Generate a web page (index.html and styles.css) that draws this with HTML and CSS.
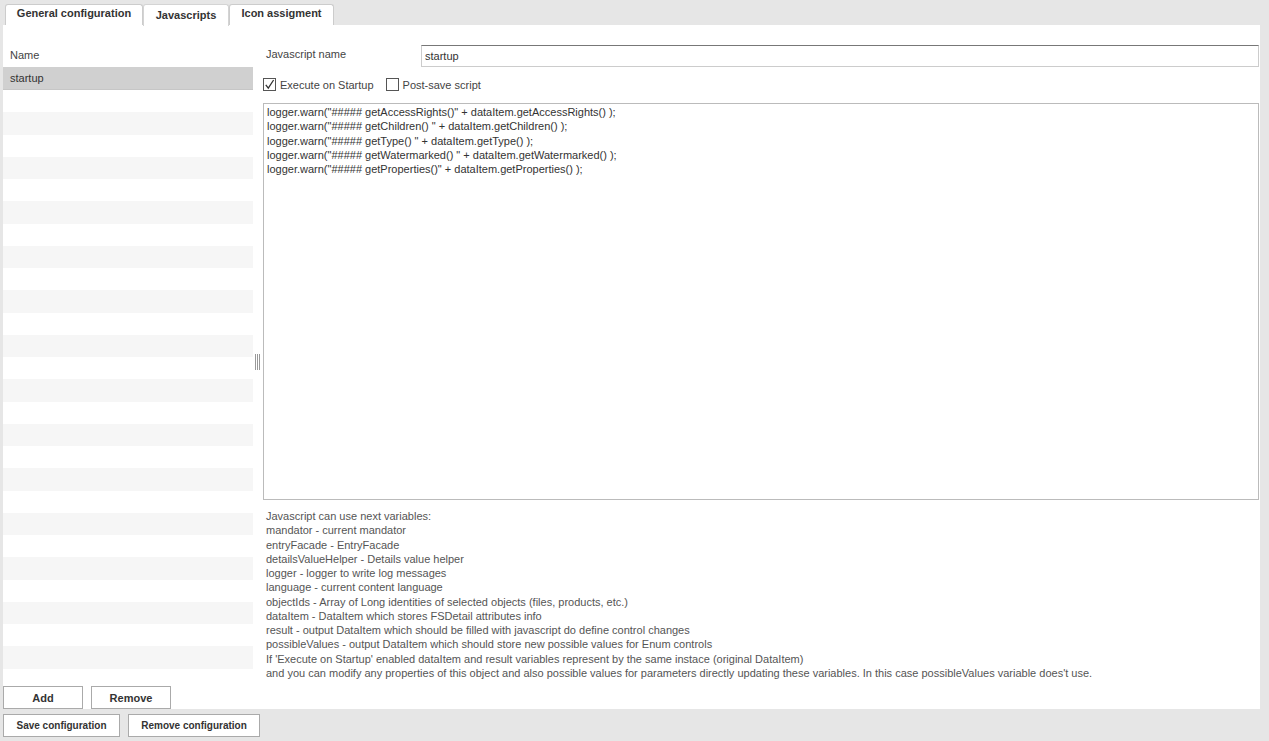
FILE: index.html
```html
<!DOCTYPE html>
<html lang="en">
<head>
    <meta charset="UTF-8">
    <title>Javascripts</title>
    <link rel="stylesheet" href="styles.css">
</head>
<body>

<div class="tabs">
    <div class="tab tab-general">General configuration</div>
    <div class="tab tab-scripts active">Javascripts</div>
    <div class="tab tab-icons">Icon assigment</div>
</div>

<div class="panel">
    <!-- Script list -->
    <div class="list-col">
        <div class="list-header">Name</div>
        <div class="list">
            <div class="row selected">startup</div>
            <div class="row"></div><div class="row alt"></div>
            <div class="row"></div><div class="row alt"></div>
            <div class="row"></div><div class="row alt"></div>
            <div class="row"></div><div class="row alt"></div>
            <div class="row"></div><div class="row alt"></div>
            <div class="row"></div><div class="row alt"></div>
            <div class="row"></div><div class="row alt"></div>
            <div class="row"></div><div class="row alt"></div>
            <div class="row"></div><div class="row alt"></div>
            <div class="row"></div><div class="row alt"></div>
            <div class="row"></div><div class="row alt"></div>
            <div class="row"></div><div class="row alt"></div>
            <div class="row"></div><div class="row alt"></div>
            <div class="row"></div>
        </div>
        <div class="list-buttons">
            <button class="btn btn-add">Add</button>
            <button class="btn btn-remove">Remove</button>
        </div>
    </div>

    <div class="splitter"><span class="grip"></span></div>

    <!-- Script editor -->
    <div class="editor">
        <div class="name-row">
            <label for="scriptName">Javascript name</label>
            <input type="text" id="scriptName" class="name-input" value="startup">
        </div>

        <div class="check-row">
            <span class="check checked">
                <svg width="11" height="11" viewBox="0 0 11 11"><path d="M1.8 5.8 L4.3 9.2 L9.6 1" fill="none" stroke="#333" stroke-width="1.3"/></svg>
            </span>
            <span class="check-label">Execute on Startup</span>
            <span class="check"></span>
            <span class="check-label">Post-save script</span>
        </div>

        <textarea class="code" spellcheck="false">logger.warn("##### getAccessRights()" + dataItem.getAccessRights() );
logger.warn("##### getChildren() " + dataItem.getChildren() );
logger.warn("##### getType() " + dataItem.getType() );
logger.warn("##### getWatermarked() " + dataItem.getWatermarked() );
logger.warn("##### getProperties()" + dataItem.getProperties() );</textarea>

        <div class="help">
            Javascript can use next variables:<br>
            mandator - current mandator<br>
            entryFacade - EntryFacade<br>
            detailsValueHelper - Details value helper<br>
            logger - logger to write log messages<br>
            language - current content language<br>
            objectIds - Array of Long identities of selected objects (files, products, etc.)<br>
            dataItem - DataItem which stores FSDetail attributes info<br>
            result - output DataItem which should be filled with javascript do define control changes<br>
            possibleValues - output DataItem which should store new possible values for Enum controls<br>
            If 'Execute on Startup' enabled dataItem and result variables represent by the same instace (original DataItem)<br>
            and you can modify any properties of this object and also possible values for parameters directly updating these variables. In this case possibleValues variable does't use.
        </div>
    </div>
</div>

<div class="bottom-buttons">
    <button class="btn btn-save">Save configuration</button>
    <button class="btn btn-remove-config">Remove configuration</button>
</div>

</body>
</html>
```

FILE: styles.css
```css
body {
    margin: 0;
    background-color: #e6e6e6;
    font-family: "Liberation Sans", Arial, sans-serif;
    font-size: 11px;
    color: #444;
}

/* Tabs */
.tabs {
    display: flex;
    padding: 4px 0 0 5px;
    height: 21px;
}

.tab {
    height: 21px;
    box-sizing: border-box;
    line-height: 17px;
    text-align: center;
    background-color: #fff;
    border: 1px solid #ccc;
    border-bottom: none;
    border-radius: 3px 3px 0 0;
    font-weight: bold;
    color: #333;
}

.tab.active {
    height: 22px;
    line-height: 20px;
    border-color: #d4d4d4;
}

.tab-general {
    width: 138px;
}

.tab-scripts {
    width: 86px;
}

.tab-icons {
    width: 105px;
}

/* Main panel */
.panel {
    display: flex;
    margin-left: 3px;
    width: 1257px;
    height: 684px;
    background-color: #fff;
}

.list-col {
    width: 250px;
    display: flex;
    flex-direction: column;
}

.list-header {
    height: 42px;
    box-sizing: border-box;
    padding: 24px 0 0 7px;
    color: #444;
}

.list {
    height: 613px;
    overflow: hidden;
}

.row {
    height: 22.25px;
    line-height: 22px;
    padding-left: 7px;
    color: #333;
}

.row.selected {
    background-color: #d0d0d0;
    border-bottom: 1px solid #c6c6c6;
    box-sizing: border-box;
    height: 23px;
}

.row.alt {
    background-color: #f6f6f6;
}

.list-buttons {
    display: flex;
    gap: 8px;
    margin-top: 6px;
}

.btn {
    height: 23px;
    padding: 0;
    background-color: #fff;
    border: 1px solid #aaa;
    font-family: "Liberation Sans", Arial, sans-serif;
    font-size: 11px;
    font-weight: bold;
    color: #333;
}

.btn-add, .btn-remove {
    width: 80px;
}

/* Splitter */
.splitter {
    width: 10px;
    display: flex;
    align-items: center;
    padding: 0 0 10px 2px;
    box-sizing: border-box;
}

.grip {
    width: 5px;
    height: 16px;
    border-left: 1px solid #999;
    border-right: 1px solid #999;
    box-sizing: border-box;
    background: linear-gradient(to right, transparent 1px, #999 1px, #999 2px, transparent 2px);
}

/* Editor */
.editor {
    flex: 1;
    padding: 20px 1px 0 0;
    display: flex;
    flex-direction: column;
}

.name-row {
    display: flex;
    align-items: center;
}

.name-row label {
    width: 155px;
    padding-left: 3px;
    padding-bottom: 5px;
    color: #444;
}

.name-input {
    flex: 1;
    height: 22px;
    box-sizing: border-box;
    padding: 0 3px;
    border: 1px solid #ccc;
    border-top-color: #777;
    font-family: "Liberation Sans", Arial, sans-serif;
    font-size: 11px;
    color: #333;
    outline: none;
}

.check-row {
    display: flex;
    align-items: center;
    margin-top: 11px;
    height: 13px;
}

.check {
    width: 13px;
    height: 13px;
    box-sizing: border-box;
    border: 1px solid #555;
    background-color: #fff;
    display: flex;
    align-items: center;
    justify-content: center;
}

.check-label {
    margin: 0 12px 0 4px;
    color: #444;
}

.code {
    margin-top: 12px;
    height: 397px;
    box-sizing: border-box;
    padding: 1px 3px;
    border: 1px solid #bbb;
    resize: none;
    font-family: "Liberation Sans", Arial, sans-serif;
    font-size: 11px;
    line-height: 14.3px;
    color: #333;
    outline: none;
}

.help {
    padding: 9px 0 0 3px;
    line-height: 14.25px;
    color: #555;
}

.bottom-buttons {
    display: flex;
    gap: 8px;
    margin: 5px 0 0 3px;
}

.bottom-buttons .btn {
    font-size: 10px;
}

.btn-save {
    width: 117px;
}

.btn-remove-config {
    width: 132px;
}
```
